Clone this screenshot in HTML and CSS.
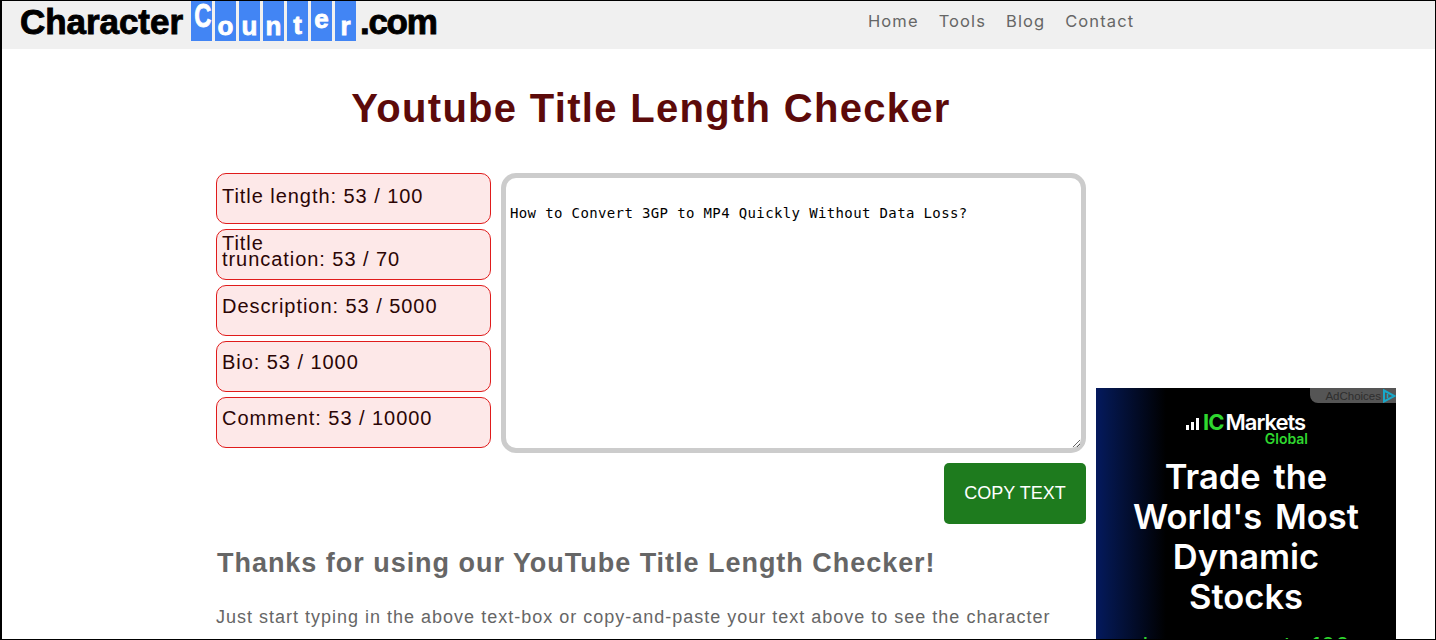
FILE: index.html
```html
<!DOCTYPE html>
<html lang="en">
<head>
    <meta charset="UTF-8">
    <meta name="viewport" content="width=device-width, initial-scale=1.0">
    <title>Youtube Title Length Checker</title>
    <link rel="stylesheet" href="styles.css">
</head>
<body>
    <div class="frame">
        <header class="topbar">
            <a class="logo" href="#">
                <span class="logo-word">Character</span>
                <span class="tiles">
                    <span class="tile tile-c"><span class="tile-big">C</span></span>
                    <span class="tile">o</span>
                    <span class="tile">u</span>
                    <span class="tile">n</span>
                    <span class="tile tile-t">t</span>
                    <span class="tile tile-e">e</span>
                    <span class="tile">r</span>
                </span>
                <span class="logo-word logo-end">.com</span>
            </a>
            <nav class="nav">
                <a href="#">Home</a>
                <a href="#">Tools</a>
                <a href="#">Blog</a>
                <a href="#">Contact</a>
            </nav>
        </header>

        <div class="page">
            <main class="content">
                <h1>Youtube Title Length Checker</h1>
                <div class="checker">
                    <div class="stats">
                        <div class="stat stat-first">Title length: 53 / 100</div>
                        <div class="stat stat-wrap">Title<br>truncation: 53 / 70</div>
                        <div class="stat">Description: 53 / 5000</div>
                        <div class="stat">Bio: 53 / 1000</div>
                        <div class="stat">Comment: 53 / 10000</div>
                    </div>
                    <textarea class="editor" spellcheck="false">How to Convert 3GP to MP4 Quickly Without Data Loss?</textarea>
                </div>
                <div class="actions">
                    <button class="copy-btn">COPY TEXT</button>
                </div>
                <h2>Thanks for using our YouTube Title Length Checker!</h2>
                <p class="intro">Just start typing in the above text-box or copy-and-paste your text above to see the character</p>
            </main>

            <aside class="ad">
                <div class="ad-choices">
                    <span>AdChoices</span>
                    <svg width="14" height="14" viewBox="0 0 14 14"><path d="M2 1.5 L12.5 7 L2 12.5 Z" fill="none" stroke="#19a8c9" stroke-width="2"/><path d="M5.5 5 V9" stroke="#19a8c9" stroke-width="1.5"/></svg>
                </div>
                <div class="ad-logo">
                    <div class="ad-brand">
                        <svg class="ad-bars" width="15" height="12" viewBox="0 0 15 12"><rect x="0" y="7" width="3" height="5" fill="#fff"/><rect x="5" y="4" width="3" height="8" fill="#fff"/><rect x="10" y="0" width="3" height="12" fill="#fff"/></svg>
                        <span class="ad-ic">IC</span><span class="ad-markets">Markets</span>
                    </div>
                    <div class="ad-global">Global</div>
                </div>
                <div class="ad-headline">Trade the<br>World's Most<br>Dynamic<br>Stocks</div>
                <div class="ad-sub">Leverage up to 100</div>
            </aside>
        </div>
    </div>
</body>
</html>
```
FILE: styles.css
```css
html, body {
    margin: 0;
    padding: 0;
    height: 640px;
    overflow: hidden;
    background-color: white;
}
.frame {
    box-sizing: border-box;
    height: 640px;
    border: 1px solid #000;
    border-left-width: 2px;
    overflow: hidden;
    font-family: "Liberation Sans", Arial, sans-serif;
}
.topbar {
    display: flex;
    height: 48px;
    background-color: #f0f0f0;
}
.logo {
    display: flex;
    align-items: flex-start;
    flex: none;
    margin-left: 18px;
    width: 416px;
    text-decoration: none;
    color: #000;
}
.logo-word {
    font-weight: bold;
    font-size: 35px;
    line-height: 42px;
    letter-spacing: -0.05px;
    -webkit-text-stroke: 0.9px #000;
}
.logo-end {
    margin-left: 4px;
    letter-spacing: -1.3px;
}
.tiles {
    display: flex;
    gap: 3px;
    margin-left: 8px;
}
.tile {
    width: 21px;
    height: 40px;
    background-color: #4285f4;
    color: white;
    text-align: center;
    font-weight: bold;
    font-size: 26px;
    line-height: 50px;
    -webkit-text-stroke: 0.8px #fff;
}
.tile-c {
    line-height: 29px;
}
.tile-big {
    display: inline-block;
    font-size: 33px;
    transform: scaleX(0.72);
}
.tile-t {
    line-height: 48px;
}
.tile-e {
    line-height: 36px;
}
.nav {
    display: flex;
    gap: 20px;
    margin-left: 432px;
    padding-top: 9px;
}
.nav a {
    font-family: Inter, "Open Sans", sans-serif;
    font-size: 16.5px;
    line-height: 22px;
    letter-spacing: 1.1px;
    color: #666;
    text-decoration: none;
}
.page {
    display: flex;
    align-items: flex-start;
    margin-left: 214px;
}
.content {
    flex: none;
    width: 870px;
}
h1 {
    margin: 36px 0 0;
    text-align: center;
    font-size: 40px;
    line-height: 46px;
    letter-spacing: 1.3px;
    color: #5c0a0a;
}
.checker {
    display: flex;
    gap: 10px;
    margin-top: 42px;
}
.stats {
    display: flex;
    flex-direction: column;
    gap: 5px;
    width: 275px;
}
.stat {
    box-sizing: border-box;
    height: 51px;
    padding: 8px 5px 0;
    border: 1px solid #e01b1b;
    border-radius: 10px;
    background-color: #fde8e8;
    font-size: 20px;
    line-height: 24px;
    letter-spacing: 0.95px;
    color: #2b0505;
}
.stat-first {
    padding-top: 10px;
}
.stat-wrap {
    padding-top: 5px;
    line-height: 16px;
}
.editor {
    box-sizing: border-box;
    width: 585px;
    height: 280px;
    margin: 0;
    padding: 28px 4px 5px;
    border: 5px solid #ccc;
    border-radius: 15px;
    outline: none;
    font-family: "DejaVu Sans Mono", "Liberation Mono", monospace;
    font-size: 14px;
    line-height: 15px;
    letter-spacing: 0.37px;
    color: #000;
}
.actions {
    display: flex;
    justify-content: flex-end;
    margin-top: 10px;
}
.copy-btn {
    width: 142px;
    height: 61px;
    border: none;
    border-radius: 5px;
    background-color: #1e7b1e;
    color: white;
    font-family: "Liberation Sans", Arial, sans-serif;
    font-size: 18px;
    cursor: pointer;
}
h2 {
    margin: 24px 0 0 1px;
    font-size: 27px;
    line-height: 31px;
    letter-spacing: 0.97px;
    color: #666;
}
.intro {
    margin: 26px 0 0;
    font-size: 18px;
    line-height: 24px;
    letter-spacing: 1px;
    color: #666;
}
.ad {
    position: relative;
    flex: none;
    box-sizing: border-box;
    width: 300px;
    height: 252px;
    margin: 339px 0 0 10px;
    padding-top: 23px;
    background: linear-gradient(90deg, #04195e 0, #04164c 12px, #000 70px);
    color: white;
    font-family: Inter, "Noto Sans", sans-serif;
    text-align: center;
    overflow: hidden;
}
.ad-choices {
    position: absolute;
    top: 0;
    right: 0;
    display: flex;
    align-items: center;
    gap: 1px;
    height: 15px;
    padding-left: 15px;
    border-bottom-left-radius: 8px;
    background-color: #555;
    font-family: "Liberation Sans", Arial, sans-serif;
    font-size: 11.5px;
    color: #2e2e2e;
}
.ad-logo {
    width: 122px;
    margin-left: 90px;
}
.ad-brand {
    display: flex;
    align-items: baseline;
    font-size: 22px;
    line-height: 22px;
    font-weight: 600;
    letter-spacing: -1px;
}
.ad-bars {
    margin-right: 2px;
}
.ad-ic {
    color: #2fd72f;
    font-weight: bold;
    margin-right: 2px;
}
.ad-global {
    text-align: right;
    margin-top: -1px;
    font-size: 14px;
    line-height: 14px;
    font-weight: 600;
    color: #2fd72f;
}
.ad-headline {
    margin-top: 11px;
    font-size: 34.5px;
    line-height: 40px;
    font-weight: 600;
    word-spacing: 4px;
}
.ad-sub {
    margin-top: 16px;
    font-size: 23px;
    line-height: 26px;
    color: #2fd72f;
}
```
